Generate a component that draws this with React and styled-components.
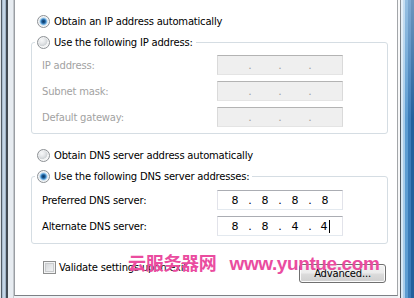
import React from 'react';
import styled, { createGlobalStyle } from 'styled-components';

const Global = createGlobalStyle`
  html, body { margin: 0; padding: 0; background: #fff; }
  body { width: 414px; height: 298px; overflow: hidden; }
  #root { width: 414px; height: 298px; }
`;

const Screen = styled.div`
  position: relative;
  display: flex;
  width: 414px;
  height: 298px;
  overflow: hidden;
  background: #eef1f4;
  font-family: "DejaVu Sans", "Liberation Sans", sans-serif;
  font-size: 10px;
  letter-spacing: -0.2px;
  color: #000;
`;

const LeftFrame = styled.div`
  flex: none;
  width: 14px;
  background: linear-gradient(
    to right,
    #dfe4e9 0 1px,
    #525c66 1px 2px,
    #aabdd0 2px 3px,
    #c4d5e5 3px 5px,
    #9fb3c7 5px 6px,
    #434b54 6px 8px,
    #e7ecf1 8px 13px,
    #c3c8cd 13px 14px
  );
`;

const RightFrame = styled.div`
  flex: none;
  width: 16px;
  background:
    linear-gradient(to bottom, rgba(255,255,255,0.35), rgba(255,255,255,0) 40%),
    linear-gradient(
      to right,
      #f6f7f8 0 2px,
      #4f5962 2px 3px,
      #d8e9f6 3px 5px,
      #a9cdea 5px 7px,
      #5d9dd2 7px 10px,
      #3a7bb8 10px 13px,
      #23609c 13px 16px
    );
`;

const Dialog = styled.div`
  position: relative;
  flex: none;
  box-sizing: border-box;
  width: 384px;
  height: 296px;
  display: flex;
  flex-direction: column;
  padding: 13px 9px 0 16px;
  background: #fff;
  border-left: 1px solid #9a9ea3;
  border-right: 1px solid #a3a6a9;
  border-bottom: 1px solid #7d8085;
`;

const OptionRow = styled.label`
  display: flex;
  align-items: center;
  gap: 4px;
  height: 16px;
  margin: ${p => p.$mt || 0}px 0 0 6px;
  white-space: nowrap;
`;

const Radio = styled.span`
  flex: none;
  box-sizing: border-box;
  width: 13px;
  height: 13px;
  border-radius: 50%;
  border: 1px solid #8d9195;
  background: ${p =>
    p.$checked
      ? 'radial-gradient(circle at 50% 50%, #0b3a66 0, #1a5690 1.6px, #4d95cf 2.6px, #a9d3f2 3.6px, #dfe6ec 4.2px, #f3f5f7 5.5px)'
      : 'radial-gradient(circle at 35% 30%, #f7f8f9 0, #e6e8ea 3px, #cfd3d6 5.5px, #f1f2f3 6px)'};
  box-shadow: inset 0 0 0 1px rgba(255, 255, 255, 0.5);
`;

const Group = styled.fieldset`
  box-sizing: border-box;
  margin: ${p => p.$mt || 0}px 0 0 0;
  padding: ${p => p.$pt}px 0 ${p => p.$pb}px 10px;
  border: 1px solid #d5dde3;
  border-radius: 3px;
  min-width: 0;
`;

const Legend = styled.legend`
  display: flex;
  align-items: center;
  gap: 4px;
  height: 16px;
  margin-left: -7px;
  padding: 0 3px 0 2px;
  background: #fff;
  white-space: nowrap;
`;

const FieldGrid = styled.div`
  display: grid;
  grid-template-columns: 175px 126px;
  grid-auto-rows: 20px;
  row-gap: 6px;
  align-items: center;
`;

const Label = styled.span`
  color: ${p => (p.$disabled ? '#a2a2a2' : '#000')};
  white-space: nowrap;
`;

const IpBox = styled.div`
  box-sizing: border-box;
  height: 20px;
  display: flex;
  align-items: center;
  padding-left: 5px;
  background: ${p => (p.$disabled ? '#efefef' : '#fff')};
  border: 1px solid ${p => (p.$disabled ? '#dadada' : '#e2e3ea')};
  border-top-color: ${p => (p.$disabled ? '#b3b3b3' : '#abadb3')};
  border-bottom-color: ${p => (p.$disabled ? '#e4e4e4' : '#e3e9ef')};
  font-size: 11px;
  letter-spacing: 0;
`;

const Octet = styled.span`
  width: 24px;
  display: flex;
  justify-content: center;
  align-items: center;
`;

const Dot = styled.span`
  width: 6px;
  text-align: center;
  color: ${p => (p.$disabled ? '#a0a0a0' : '#000')};
`;

const Caret = styled.span`
  display: inline-block;
  width: 1px;
  height: 13px;
  margin-left: 1px;
  background: #000;
`;

const BottomRow = styled.div`
  display: flex;
  align-items: flex-start;
  justify-content: space-between;
  margin-top: 17px;
`;

const CheckRow = styled.label`
  display: flex;
  align-items: center;
  gap: 3px;
  margin-left: 12px;
  height: 13px;
  white-space: nowrap;
`;

const Checkbox = styled.span`
  flex: none;
  box-sizing: border-box;
  width: 13px;
  height: 13px;
  border: 1px solid #8e8f8f;
  background: linear-gradient(135deg, #cfd1d3 0%, #e4e6e8 50%, #f6f7f8 100%);
  box-shadow: inset 0 0 0 1px #f2f3f4, inset 0 0 0 2px #c9cbcd;
`;

const Button = styled.button`
  box-sizing: border-box;
  width: 87px;
  height: 19px;
  margin: 3px 2px 0 0;
  padding: 0;
  border: 1px solid #707070;
  border-radius: 3px;
  background: linear-gradient(#f3f3f3 0%, #ebebeb 48%, #dcdcdc 52%, #cfcfcf 100%);
  box-shadow: inset 0 0 0 1px #fbfbfb;
  font: inherit;
  letter-spacing: inherit;
  color: #000;
`;

const Watermark = styled.div`
  position: absolute;
  left: 128px;
  top: 249px;
  display: flex;
  align-items: baseline;
  gap: 13px;
  color: #ea4c9f;
  font-weight: bold;
  pointer-events: none;
  white-space: nowrap;
`;

const WmCjk = styled.span`
  font-family: "Noto Sans CJK SC", sans-serif;
  font-size: 18px;
  letter-spacing: -0.3px;
`;

const WmUrl = styled.span`
  font-family: "Liberation Sans", sans-serif;
  font-size: 19px;
  letter-spacing: -0.4px;
`;

function IpField({ values, disabled, caret }) {
  const v = values || ['', '', '', ''];
  return (
    <IpBox $disabled={disabled}>
      {v.map((n, i) => (
        <React.Fragment key={i}>
          <Octet>
            {n}
            {caret && i === 3 ? <Caret /> : null}
          </Octet>
          {i < 3 ? <Dot $disabled={disabled}>.</Dot> : null}
        </React.Fragment>
      ))}
    </IpBox>
  );
}

export default function App() {
  return (
    <>
      <Global />
      <Screen>
        <LeftFrame />
        <Dialog>
          <OptionRow>
            <Radio $checked />
            Obtain an IP address automatically
          </OptionRow>
          <Group $mt={5} $pt={5} $pb={6}>
            <Legend>
              <Radio />
              Use the following IP address:
            </Legend>
            <FieldGrid>
              <Label $disabled>IP address:</Label>
              <IpField disabled />
              <Label $disabled>Subnet mask:</Label>
              <IpField disabled />
              <Label $disabled>Default gateway:</Label>
              <IpField disabled />
            </FieldGrid>
          </Group>
          <OptionRow $mt={13}>
            <Radio />
            Obtain DNS server address automatically
          </OptionRow>
          <Group $mt={5} $pt={6} $pb={7}>
            <Legend>
              <Radio $checked />
              Use the following DNS server addresses:
            </Legend>
            <FieldGrid>
              <Label>Preferred DNS server:</Label>
              <IpField values={['8', '8', '8', '8']} />
              <Label>Alternate DNS server:</Label>
              <IpField values={['8', '8', '4', '4']} caret />
            </FieldGrid>
          </Group>
          <BottomRow>
            <CheckRow>
              <Checkbox />
              Validate settings upon exit
            </CheckRow>
            <Button>Advanced...</Button>
          </BottomRow>
        </Dialog>
        <RightFrame />
        <Watermark>
          <WmCjk>云服务器网</WmCjk>
          <WmUrl>www.yuntue.com</WmUrl>
        </Watermark>
      </Screen>
    </>
  );
}
